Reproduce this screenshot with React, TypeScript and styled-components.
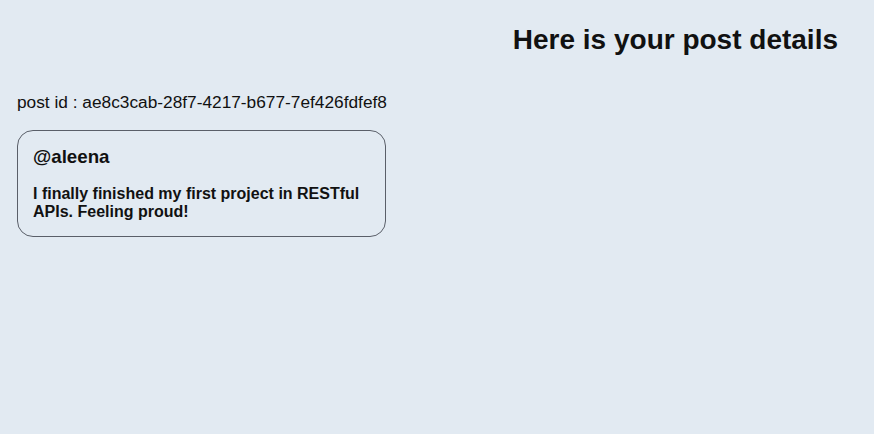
import React from "react";
import styled, { createGlobalStyle } from "styled-components";

const Global = createGlobalStyle`
  html, body { margin: 0; padding: 0; background: #e2eaf2; }
  body { font-family: "Liberation Sans", Arial, sans-serif; color: #111; }
`;

const Page = styled.div`
  display: flex;
  flex-direction: column;
  padding: 24px 36px 20px 17px;
  min-height: 434px;
  box-sizing: border-box;
`;

const Title = styled.h1`
  margin: 0;
  align-self: flex-end;
  font-size: 28px;
  line-height: 32px;
  font-weight: bold;
  color: #111;
`;

const PostId = styled.div`
  margin-top: 36px;
  font-size: 17.3px;
  line-height: 20px;
  color: #111;
`;

const Card = styled.div`
  margin-top: 18px;
  width: 369px;
  box-sizing: border-box;
  border: 1px solid #5a5f69;
  border-radius: 16px;
  padding: 15px;
`;

const Username = styled.h3`
  margin: 0 0 18px;
  font-size: 18.72px;
  line-height: 21px;
  font-weight: bold;
  color: #111;
`;

const Body = styled.p`
  margin: 0;
  font-size: 16px;
  line-height: 18px;
  font-weight: bold;
  color: #111;
`;

export default function App() {
  return (
    <>
      <Global />
      <Page>
        <Title>Here is your post details</Title>
        <PostId>post id : ae8c3cab-28f7-4217-b677-7ef426fdfef8</PostId>
        <Card>
          <Username>@aleena</Username>
          <Body>I finally finished my first project in RESTful APIs. Feeling proud!</Body>
        </Card>
      </Page>
    </>
  );
}
